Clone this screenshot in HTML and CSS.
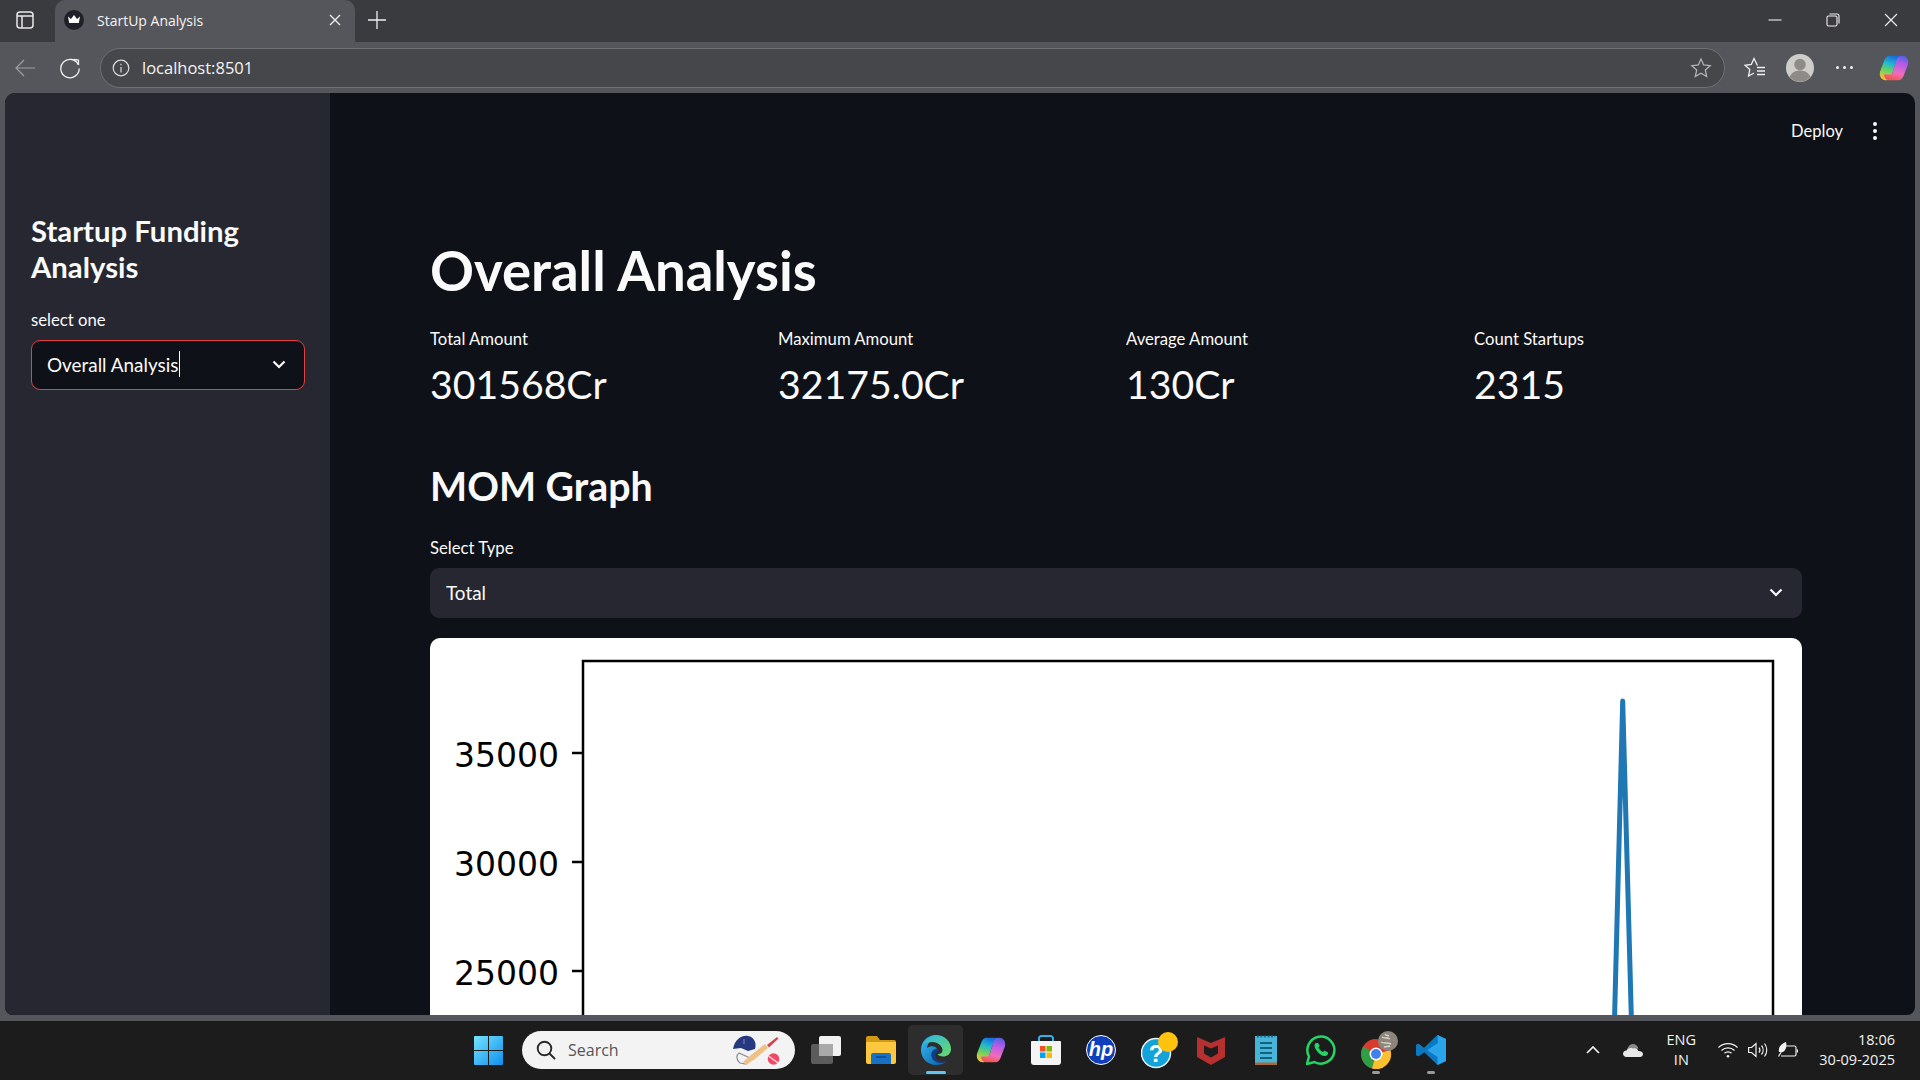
FILE: index.html
```html
<!DOCTYPE html>
<html lang="en">

<head>
    <meta charset="UTF-8">
    <meta name="viewport" content="width=device-width, initial-scale=1.0">
    <title>StartUp Analysis</title>
    <link rel="stylesheet" href="styles.css">
</head>

<body>
    <!-- Browser tab strip -->
    <div class="titlebar">
        <svg class="panel-icon" width="18" height="18" viewBox="0 0 18 18" fill="none" stroke="#e8e8e8" stroke-width="1.500">
            <rect x="1" y="1" width="16" height="16" rx="3"/>
            <path d="M1 5h16M6 5v12"/>
        </svg>
        <div class="tab">
            <svg class="favicon" width="20" height="20" viewBox="0 0 20 20">
                <circle cx="10" cy="10" r="10" fill="#1f2029"/>
                <path d="M4 6.500l3 2.500 3-4 3 4 3-2.500-1.200 6.500H5.200z" fill="#fff"/>
            </svg>
            <span class="tab-title">StartUp Analysis</span>
            <svg class="tab-close" width="12" height="12" viewBox="0 0 12 12" stroke="#f0f0f0" stroke-width="1.300">
                <path d="M1 1l10 10M11 1L1 11"/>
            </svg>
        </div>
        <svg class="new-tab" width="18" height="18" viewBox="0 0 18 18" stroke="#f0f0f0" stroke-width="1.300">
            <path d="M9 0v18M0 9h18"/>
        </svg>
        <div class="window-btns">
            <svg width="14" height="14" viewBox="0 0 14 14" stroke="#f0f0f0" stroke-width="1.100" fill="none">
                <path d="M0.500 7h13"/>
            </svg>
            <svg width="14" height="14" viewBox="0 0 14 14" stroke="#f0f0f0" stroke-width="1.100" fill="none">
                <rect x="1" y="3" width="10" height="10" rx="1.500"/>
                <path d="M3.500 1h7.500a2 2 0 0 1 2 2v7.500"/>
            </svg>
            <svg width="14" height="14" viewBox="0 0 14 14" stroke="#f0f0f0" stroke-width="1.100" fill="none">
                <path d="M1 1l12 12M13 1L1 13"/>
            </svg>
        </div>
    </div>

    <!-- Address bar -->
    <div class="toolbar">
        <svg class="back-btn" width="20" height="18" viewBox="0 0 20 18" fill="none" stroke="#9d9ea1" stroke-width="1.200">
            <path d="M20 9H1M9 1L1 9l8 8"/>
        </svg>
        <svg class="reload-btn" width="22" height="22" viewBox="0 0 22 22" fill="none" stroke="#f0f0f0" stroke-width="1.300">
            <path d="M19.500 8A9.200 9.200 0 1 0 20.200 11.500"/>
            <path d="M14.500 2.500l5 .5V8"/>
        </svg>
        <div class="url-pill">
            <svg width="18" height="18" viewBox="0 0 18 18" fill="none" stroke="#dcdcdc" stroke-width="1.200">
                <circle cx="9" cy="9" r="7.800"/>
                <path d="M9 8v5.500M9 4.800v1.500"/>
            </svg>
            <span class="url-text">localhost:8501</span>
            <svg class="url-star" width="22" height="22" viewBox="0 0 22 22" fill="none" stroke="#b4b4b6" stroke-width="1.300">
                <path d="M11 2l2.700 6 6.500.7-4.900 4.400 1.400 6.400L11 16.200l-5.700 3.300 1.400-6.400L1.800 8.700 8.300 8z"/>
            </svg>
        </div>
        <svg class="fav-btn" width="22" height="22" viewBox="0 0 22 22" fill="none" stroke="#f0f0f0" stroke-width="1.300">
            <path d="M13.500 8.500L10 1.500 7.300 7.500 1 8.300l4.800 4.300L4.500 19l5.500-3"/>
            <path d="M13 10.500h8M13 14h8M13 17.500h8"/>
        </svg>
        <svg class="profile-btn" width="28" height="28" viewBox="0 0 28 28">
            <circle cx="14" cy="14" r="14" fill="#cfcdc9"/>
            <circle cx="14" cy="10.500" r="5.800" fill="#8f8c88"/>
            <path d="M3.500 23c2-4.500 6-6.500 10.500-6.500s8.500 2 10.500 6.500a14 14 0 0 1-21 0z" fill="#8f8c88"/>
        </svg>
        <div class="more-btn"><span></span><span></span><span></span></div>
        <svg class="copilot-btn" width="30" height="28" viewBox="0 0 32 30">
            <use href="#copilot"/>
        </svg>
    </div>

    <div class="window">
        <aside class="sidebar">
            <h3 class="side-title">Startup Funding Analysis</h3>
            <label class="field-label">select one</label>
            <div class="select select-focus">
                <span>Overall Analysis</span><i class="caret"></i>
                <svg class="chevron" width="14" height="9" viewBox="0 0 14 9" fill="none" stroke="#fafafa" stroke-width="2.200">
                    <path d="M1.500 1.500L7 7l5.500-5.500"/>
                </svg>
            </div>
        </aside>

        <main class="content">
            <div class="topbar">
                <span class="deploy">Deploy</span>
                <div class="kebab"><span></span><span></span><span></span></div>
            </div>
            <div class="block">
                <h1>Overall Analysis</h1>
                <div class="metrics">
                    <div class="metric">
                        <div class="metric-label">Total Amount</div>
                        <div class="metric-value">301568Cr</div>
                    </div>
                    <div class="metric">
                        <div class="metric-label">Maximum Amount</div>
                        <div class="metric-value">32175.0Cr</div>
                    </div>
                    <div class="metric">
                        <div class="metric-label">Average Amount</div>
                        <div class="metric-value">130Cr</div>
                    </div>
                    <div class="metric">
                        <div class="metric-label">Count Startups</div>
                        <div class="metric-value">2315</div>
                    </div>
                </div>
                <h2>MOM Graph</h2>
                <label class="field-label">Select Type</label>
                <div class="select select-plain">
                    <span>Total</span>
                    <svg class="chevron" width="14" height="9" viewBox="0 0 14 9" fill="none" stroke="#fafafa" stroke-width="2.200">
                        <path d="M1.500 1.500L7 7l5.500-5.500"/>
                    </svg>
                </div>
                <div class="chart-card">
                    <svg class="chart" width="1372" height="440" viewBox="0 0 1372 440">
                        <path d="M153 440V23H1343V440" fill="none" stroke="#000" stroke-width="2.500"/>
                        <path d="M142 115h11M142 224h11M142 333h11" stroke="#000" stroke-width="2.500"/>
                        <text x="129" y="129" class="tick">35000</text>
                        <text x="129" y="238" class="tick">30000</text>
                        <text x="129" y="347" class="tick">25000</text>
                        <path d="M1183 440L1192.700 63L1203 440" fill="none" stroke="#1f77b4" stroke-width="5" stroke-linejoin="round"/>
                    </svg>
                </div>
            </div>
        </main>
    </div>

    <!-- Windows taskbar -->
    <div class="taskbar">
        <svg class="start" width="29" height="29" viewBox="0 0 29 29">
            <defs>
                <linearGradient id="win" x1="0" y1="0" x2="1" y2="1">
                    <stop offset="0" stop-color="#74e4ff"/>
                    <stop offset="1" stop-color="#0f8fec"/>
                </linearGradient>
            </defs>
            <path d="M1 0h13v14H0V1a1 1 0 0 1 1-1zM15 0h13a1 1 0 0 1 1 1v13H15zM0 15h14v14H1a1 1 0 0 1-1-1zM15 15h14v13a1 1 0 0 1-1 1H15z" fill="url(#win)"/>
        </svg>
        <div class="search">
            <svg width="20" height="20" viewBox="0 0 20 20" fill="none" stroke="#2a2a2a" stroke-width="1.900">
                <circle cx="8.500" cy="8.500" r="6.800"/>
                <path d="M13.500 13.500L19 19"/>
            </svg>
            <span class="search-text">Search</span>
            <svg class="search-art" width="52" height="32" viewBox="0 0 52 32">
                <path d="M7 19c-3 2-3 7 1 10l6 1 4-6z" fill="none" stroke="#8b8f94" stroke-width="1.200"/>
                <path d="M1 15C3 5 10 1 16 2c6 1 9 7 7 13l-7 2-7-3z" fill="#26397f"/>
                <path d="M12 5v5" stroke="#7b8fcc" stroke-width="1"/>
                <path d="M14 31l-3-3 8-7 14-11 3 4-13 11z" fill="#eec189"/>
                <path d="M35 11l10-8 1.500 1.500-9.500 9z" fill="#d3454b"/>
                <circle cx="41.500" cy="25" r="5.800" fill="#ee4a67"/>
                <path d="M36.500 22l9.500 7" stroke="#fbd4dc" stroke-width="1.500"/>
            </svg>
        </div>
        <div class="task-icon">
            <svg width="30" height="28" viewBox="0 0 30 28">
                <rect x="0" y="8" width="22" height="20" rx="2" fill="#5c5c5c"/>
                <rect x="8" y="0" width="22" height="20" rx="2" fill="#f2f2f2"/>
                <rect x="8" y="8" width="14" height="12" fill="#a9a9a9"/>
            </svg>
        </div>
        <div class="task-icon">
            <svg width="30" height="28" viewBox="0 0 30 28">
                <path d="M0 2a2 2 0 0 1 2-2h9l3 4h14a2 2 0 0 1 2 2v4H0z" fill="#d19a12"/>
                <path d="M0 6h30v20a2 2 0 0 1-2 2H2a2 2 0 0 1-2-2z" fill="#fdc83f"/>
                <path d="M5 19a2 2 0 0 1 2-2h16a2 2 0 0 1 2 2v9H5z" fill="#1670c4"/>
                <path d="M10 21h10" stroke="#0c3f78" stroke-width="1.200"/>
            </svg>
        </div>
        <div class="task-icon task-active">
            <svg width="30" height="30" viewBox="0 0 30 30">
                <defs>
                    <linearGradient id="edgeA" x1="0" y1="0" x2="1" y2="1">
                        <stop offset="0" stop-color="#35c1f1"/>
                        <stop offset="1" stop-color="#0b57a8"/>
                    </linearGradient>
                    <linearGradient id="edgeB" x1="0" y1="0" x2="1" y2="1">
                        <stop offset="0" stop-color="#2cb5e8"/>
                        <stop offset="1" stop-color="#6bdc62"/>
                    </linearGradient>
                </defs>
                <path d="M15 0C6.500 0 0 6.500 0 15c0 8.500 6.800 15 15 15 4 0 7.500-1 10-3-5 1.500-11 .5-13-4-2-4 0-9 4-9-1-3-6-4-10-1C7 7 11 3 15 3z" fill="url(#edgeA)"/>
                <path d="M3 9C6 3.500 10 0 15 0c8 0 15 6 15 14 0 5-4 7.500-8 7.500-2.500 0-5-1-5.500-2.500 3 0 5-1 5-4 0-4-5-8-10-8-3.500 0-6.500 1-8.500 2z" fill="url(#edgeB)"/>
                <path d="M16 14c-4 0-6.500 3.500-5.500 7.500 1 5 7 8 14 5.500 1-.5 0-1.500-1-1-5 1.500-9-1-9-5 0-3 1.500-5.500 4.500-5.500z" fill="#0d3f86"/>
            </svg>
        </div>
        <div class="task-icon">
            <svg width="30" height="28" viewBox="0 0 32 30">
                <use href="#copilot"/>
            </svg>
        </div>
        <div class="task-icon">
            <svg width="30" height="30" viewBox="0 0 30 30">
                <path d="M8 8V3.500A2.500 2.500 0 0 1 10.500 1h9A2.500 2.500 0 0 1 22 3.500V8" fill="none" stroke="#34b0e8" stroke-width="2"/>
                <path d="M1 6h28a1 1 0 0 1 1 1v20a3 3 0 0 1-3 3H3a3 3 0 0 1-3-3V7a1 1 0 0 1 1-1z" fill="#f4f4f4"/>
                <rect x="9" y="11" width="5.500" height="5.500" fill="#f05022"/>
                <rect x="15.500" y="11" width="5.500" height="5.500" fill="#7eba00"/>
                <rect x="9" y="17.500" width="5.500" height="5.500" fill="#00a4ef"/>
                <rect x="15.500" y="17.500" width="5.500" height="5.500" fill="#ffb900"/>
            </svg>
        </div>
        <div class="task-icon">
            <svg width="30" height="30" viewBox="0 0 30 30">
                <circle cx="15" cy="15" r="14.500" fill="#0f3fbd" stroke="#fff" stroke-width="1"/>
                <text x="15" y="21" class="hp-text">hp</text>
            </svg>
        </div>
        <div class="task-icon badge-icon">
            <svg width="38" height="38" viewBox="0 0 38 38">
                <circle cx="15" cy="22" r="14.500" fill="#13a3d8" stroke="#e8f5fb" stroke-width="1.500"/>
                <text x="15" y="31" class="help-text">?</text>
                <circle cx="27" cy="11" r="10" fill="#ffc20e"/>
            </svg>
        </div>
        <div class="task-icon">
            <svg width="28" height="30" viewBox="0 0 28 30">
                <path d="M0 2l14 6 14-6v20l-14 8-14-8z" fill="#b5302e"/>
                <path d="M7 10.500l7 3 7-3v8l-7 4-7-4z" fill="#1c1c1c"/>
            </svg>
        </div>
        <div class="task-icon">
            <svg width="22" height="30" viewBox="0 0 22 30">
                <rect x="0" y="1" width="22" height="29" fill="#48b4d8"/>
                <rect x="0" y="27.500" width="22" height="2.500" fill="#a9673a"/>
                <path d="M2 1.500h18" stroke="#1b6f91" stroke-width="2" stroke-dasharray="2 1.500"/>
                <path d="M5 8h12M5 13h12M5 18h12M5 23h12" stroke="#12617f" stroke-width="1.800"/>
            </svg>
        </div>
        <div class="task-icon">
            <svg width="30" height="30" viewBox="0 0 30 30">
                <path d="M1 29l2-7.500A13.500 13.500 0 1 1 8.500 27z" fill="none" stroke="#25d366" stroke-width="2.500"/>
                <path d="M10 8c-2 1-2 4 .5 7.500 2.500 3.500 6 6 9 5.500 2-.5 3-2.500 2.500-3.500l-3.500-2-1.500 1.500c-2-.8-3.500-2.500-4.500-4.500l1.300-1.500L12 8z" fill="#25d366"/>
            </svg>
        </div>
        <div class="task-icon task-open badge-icon">
            <svg width="38" height="38" viewBox="0 0 38 38">
                <circle cx="15" cy="23" r="15" fill="#d93a2e"/>
                <path d="M15 23L2.200 15.500A15 15 0 0 0 11 37.500z" fill="#2f9e44"/>
                <path d="M15 23l-4 14.500A15 15 0 0 0 29.500 19z" fill="#fbc02d"/>
                <circle cx="15" cy="23" r="6.500" fill="#fff"/>
                <circle cx="15" cy="23" r="5" fill="#3f80ee"/>
                <circle cx="27" cy="10" r="10" fill="#8c857b"/>
                <path d="M21 6c3 2 5 0 8 2M20 11c3 2 6 0 10 2M23 16c2-1 4 0 6-1M24 3c1 2 3 1 4 2" fill="none" stroke="#d9d4cb" stroke-width="1.400"/>
            </svg>
        </div>
        <div class="task-icon task-open">
            <svg width="30" height="30" viewBox="0 0 30 30">
                <path d="M21.500 0L30 4v22l-8.500 4L8 17l-5.500 4.300L0 20v-10l2.500-1.300L8 13z" fill="#0b78c2"/>
                <path d="M21.500 0L30 4v22l-8.500 4zM21.500 8L11 15l10.500 7z" fill="#2aa5ec" fill-rule="evenodd"/>
                <path d="M0 20l2.500 1.300L21.500 8V0L8 13 2.500 8.700 0 10z" fill="#0b78c2"/>
            </svg>
        </div>

        <div class="tray">
            <svg class="tray-chevron" width="14" height="8" viewBox="0 0 14 8" fill="none" stroke="#f2f2f2" stroke-width="1.700">
                <path d="M1 7l6-6 6 6"/>
            </svg>
            <svg class="tray-cloud" width="20" height="13" viewBox="0 0 20 13">
                <path d="M4 5.500C5 2 7.500 0 10 0c2.500 0 4.500 1.500 5.500 4.500L4 7z" fill="#8a8a8a"/>
                <path d="M3.500 13C1.500 13 0 11.500 0 9.800 0 8 1.500 6.500 3.500 6.500 5 4.500 7 3.500 9.500 4.500 12 3.500 15 5 15.500 7c2.500 0 4.500 1 4.500 3s-1.500 3-3 3z" fill="#e8e8e8"/>
            </svg>
            <div class="tray-lang">ENG<br>IN</div>
            <svg class="tray-wifi" width="20" height="16" viewBox="0 0 20 16" fill="none" stroke="#f2f2f2" stroke-width="1.200">
                <path d="M0.500 5.500a13.500 13.500 0 0 1 19 0M3.500 8.500a9.500 9.500 0 0 1 13 0M6.500 11.300a5 5 0 0 1 7 0"/>
                <circle cx="10" cy="14.300" r="1.300" fill="#f2f2f2" stroke="none"/>
            </svg>
            <svg class="tray-sound" width="20" height="16" viewBox="0 0 20 16" fill="none" stroke="#f2f2f2" stroke-width="1.200">
                <path d="M0.600 5.500h3L8 1.500v13l-4.400-4h-3z"/>
                <path d="M11 5.500a4 4 0 0 1 0 5M13.500 3.500a7 7 0 0 1 0 9M16.500 1.500a10.500 10.500 0 0 1 0 13"/>
            </svg>
            <svg class="tray-battery" width="20" height="18" viewBox="0 0 20 18" fill="none" stroke="#f2f2f2" stroke-width="1.200">
                <path d="M7 5h9.500a1.500 1.500 0 0 1 1.500 1.500v7a1.500 1.500 0 0 1-1.500 1.500H3"/>
                <path d="M19.500 8.500v3"/>
                <path d="M1 11C0 6 3 3 8 1c1 4 0 8-3 10z" fill="#f2f2f2" stroke="none"/>
                <path d="M0.500 15.500L5 8"/>
            </svg>
            <div class="tray-clock">18:06<br>30-09-2025</div>
        </div>
    </div>

    <svg class="svg-defs" width="0" height="0">
        <defs>
            <linearGradient id="copA" x1="0.600" y1="0" x2="0.300" y2="1">
                <stop offset="0" stop-color="#1668e0"/>
                <stop offset="0.350" stop-color="#22b8cf"/>
                <stop offset="0.650" stop-color="#6fd35b"/>
                <stop offset="1" stop-color="#f6c23c"/>
            </linearGradient>
            <linearGradient id="copB" x1="0.600" y1="0" x2="0.300" y2="1">
                <stop offset="0" stop-color="#f2564a"/>
                <stop offset="0.300" stop-color="#f06cc0"/>
                <stop offset="0.700" stop-color="#b45be8"/>
                <stop offset="1" stop-color="#5a5fe6"/>
            </linearGradient>
            <symbol id="copilot" viewBox="0 0 32 30">
                <path id="copLobe" d="M11 2h11c2 0 3.500 1.500 4 3l1 3h-6c-2 0-3 1-3.500 2.500L13 24c-1 3-3 4-5 4H7C2 28 0 23 1 19L6 6c1-2.500 3-4 5-4z" fill="url(#copA)"/>
                <path d="M11 2h11c2 0 3.500 1.500 4 3l1 3h-6c-2 0-3 1-3.500 2.500L13 24c-1 3-3 4-5 4H7C2 28 0 23 1 19L6 6c1-2.500 3-4 5-4z" fill="url(#copB)" transform="rotate(180 16 15)"/>
            </symbol>
        </defs>
    </svg>
</body>

</html>
```

FILE: styles.css
```css
* {
    box-sizing: border-box;
}

body {
    margin: 0;
    height: 100vh;
    overflow: hidden;
    display: flex;
    flex-direction: column;
    background-color: #55565b;
    font-family: "Lato", "Noto Sans", sans-serif;
    color: #fafafa;
}

svg {
    flex-shrink: 0;
    display: block;
}

.svg-defs {
    position: absolute;
}

/* browser tab strip */
.titlebar {
    height: 42px;
    flex-shrink: 0;
    display: flex;
    align-items: center;
    padding-bottom: 2px;
    background-color: #3a3b3f;
    font-family: "Open Sans", sans-serif;
}

.panel-icon {
    margin-left: 16px;
    margin-right: 21px;
}

.tab {
    width: 300px;
    height: 42px;
    margin-bottom: -2px;
    display: flex;
    align-items: center;
    padding: 0 14px 2px 9px;
    background-color: #55565b;
    border-radius: 10px 10px 0 0;
    font-size: 14px;
}

.tab-title {
    margin-left: 13px;
    flex: 1;
    color: #f4f4f4;
}

.new-tab {
    margin-left: 13px;
}

.window-btns {
    margin-left: auto;
    padding-right: 22px;
    display: flex;
    gap: 44px;
}

/* address bar */
.toolbar {
    height: 51px;
    flex-shrink: 0;
    display: flex;
    align-items: center;
    font-family: "Open Sans", sans-serif;
}

.back-btn {
    margin-left: 15px;
}

.reload-btn {
    margin-left: 24px;
}

.url-pill {
    width: 1625px;
    height: 40px;
    margin-left: 19px;
    display: flex;
    align-items: center;
    padding: 0 12px 0 11px;
    background-color: #46474b;
    border: 1px solid #6f7074;
    border-radius: 20px;
}

.url-text {
    margin-left: 12px;
    font-size: 16.500px;
    color: #f4f4f4;
}

.url-star {
    margin-left: auto;
}

.fav-btn {
    margin-left: 19px;
}

.profile-btn {
    margin-left: 20px;
}

.more-btn {
    margin-left: 22px;
    display: flex;
    gap: 4px;
}

.more-btn span {
    width: 3px;
    height: 3px;
    border-radius: 50%;
    background-color: #f0f0f0;
}

.copilot-btn {
    margin-left: 26px;
}

/* page area */
.window {
    flex: 1;
    min-height: 0;
    margin: 0 5px 6px 5px;
    display: flex;
    overflow: hidden;
    border-radius: 10px 10px 8px 8px;
    background-color: #0e1117;
}

.sidebar {
    width: 325px;
    flex-shrink: 0;
    padding: 120px 25px 0 26px;
    background-color: #262730;
}

.side-title {
    margin: 0 0 23px 0;
    font-size: 29.300px;
    line-height: 36px;
    font-weight: 700;
}

.field-label {
    display: block;
    font-size: 16.700px;
    line-height: 24px;
    margin-bottom: 8px;
}

.select {
    height: 50px;
    display: flex;
    align-items: center;
    padding: 0 19px 2px 15px;
    border-radius: 9px;
    font-size: 18.900px;
}

.select .chevron {
    margin-left: auto;
}

.select-focus {
    padding-right: 18px;
    background-color: #0e1117;
    border: 1px solid #e5403f;
}

.select-plain {
    background-color: #262730;
    padding-left: 16px;
    margin-bottom: 20px;
}

.caret {
    width: 1px;
    height: 26px;
    margin-left: 1px;
    background-color: #fafafa;
}

.content {
    flex: 1;
    min-width: 0;
    overflow: hidden;
}

.topbar {
    height: 76px;
    display: flex;
    align-items: center;
    justify-content: flex-end;
    padding-right: 38px;
    padding-bottom: 1px;
}

.deploy {
    font-size: 16.500px;
}

.kebab {
    margin-left: 30px;
    display: flex;
    flex-direction: column;
    gap: 3px;
}

.kebab span {
    width: 4px;
    height: 4px;
    border-radius: 50%;
    background-color: #fafafa;
}

.block {
    padding: 0 113px 0 100px;
}

h1 {
    margin: 66px 0 22px 0;
    font-size: 54.500px;
    line-height: 70px;
    font-weight: 700;
}

.metrics {
    display: grid;
    grid-template-columns: repeat(4, 348px);
}

.metric-label {
    font-size: 16.700px;
    line-height: 24px;
    margin-bottom: 5px;
}

.metric-value {
    font-size: 39.200px;
    line-height: 56px;
}

h2 {
    margin: 44px 0 20px 0;
    font-size: 39.300px;
    line-height: 60px;
    font-weight: 700;
}

.chart-card {
    background-color: #fff;
    border-radius: 10px;
    overflow: hidden;
}

.tick {
    font-family: "DejaVu Sans", sans-serif;
    font-size: 33px;
    text-anchor: end;
    fill: #000;
}

/* windows taskbar */
.taskbar {
    height: 59px;
    flex-shrink: 0;
    display: flex;
    align-items: center;
    padding-left: 474px;
    padding-bottom: 1px;
    background-color: #1c1c1c;
    font-family: "Open Sans", sans-serif;
}

.search {
    width: 273px;
    height: 38px;
    margin-left: 19px;
    margin-right: 3px;
    display: flex;
    align-items: center;
    padding: 0 14px;
    background-color: #f3f3f3;
    border-radius: 19px;
}

.search-text {
    margin-left: 12px;
    font-size: 16px;
    color: #555;
}

.search-art {
    margin-left: auto;
    margin-right: -3px;
}

.task-icon {
    width: 55px;
    height: 50px;
    display: flex;
    align-items: center;
    justify-content: center;
    position: relative;
}

.badge-icon svg {
    margin-left: 8px;
}

.task-active {
    background-color: #2d2d2d;
    border-radius: 5px;
}

.task-active::after,
.task-open::after {
    content: "";
    position: absolute;
    bottom: 1px;
    left: 50%;
    transform: translateX(-50%);
    height: 3px;
    border-radius: 2px;
}

.task-active::after {
    width: 20px;
    background-color: #5cc6f5;
}

.task-open::after {
    width: 8px;
    background-color: #9a9a9a;
}

.hp-text {
    font-family: "Liberation Sans", sans-serif;
    font-size: 20px;
    font-weight: 700;
    font-style: italic;
    text-anchor: middle;
    fill: #fff;
}

.help-text {
    font-family: "Liberation Sans", sans-serif;
    font-size: 24px;
    font-weight: 700;
    text-anchor: middle;
    fill: #fff;
}

.tray {
    margin-left: auto;
    padding-right: 25px;
    display: flex;
    align-items: center;
    color: #f2f2f2;
    font-size: 14.500px;
}

.tray-cloud {
    margin-left: 23px;
}

.tray-lang {
    width: 50px;
    margin-left: 13px;
    text-align: center;
    line-height: 20px;
}

.tray-wifi {
    margin-left: 12px;
}

.tray-sound {
    margin-left: 10px;
}

.tray-battery {
    margin-left: 10px;
}

.tray-clock {
    margin-left: 21px;
    text-align: right;
    line-height: 20px;
}
```
